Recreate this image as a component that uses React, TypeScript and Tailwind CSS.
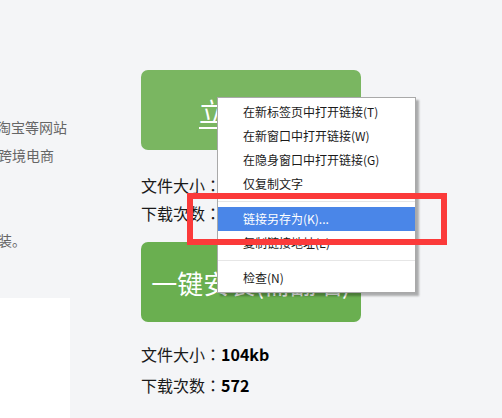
const menuItems = [
  { label: '在新标签页中打开链接(T)' },
  { label: '在新窗口中打开链接(W)' },
  { label: '在隐身窗口中打开链接(G)' },
  { label: '仅复制文字' },
  { sep: true },
  { label: '链接另存为(K)...', active: true },
  { label: '复制链接地址(E)' },
  { sep: true },
  { label: '检查(N)' },
];

function Stat({ name, value, className = '' }: { name: string; value?: string; className?: string }) {
  return (
    <div
      className={`h-[28px] leading-[28px] text-[16px] text-[#1a1a1a] whitespace-nowrap ${className}`}
      style={{ fontFamily: '"Noto Sans CJK TC", "Noto Sans CJK SC", sans-serif' }}
    >
      {name}
      {value && <b className="font-bold text-black">{value}</b>}
    </div>
  );
}

export default function App() {
  return (
    <div
      className="relative flex h-[418px] w-full overflow-hidden bg-[#f4f5f7]"
      style={{ fontFamily: '"Noto Sans CJK SC", "Noto Sans", sans-serif' }}
    >
      {/* left column, clipped text */}
      <div className="flex w-[70px] shrink-0 flex-col overflow-hidden pt-[113px] text-[14px] text-[#666]">
        <div className="ml-[-17px] h-[28px] leading-[28px] whitespace-nowrap">和淘宝等网站</div>
        <div className="ml-[-16px] h-[28px] leading-[28px] whitespace-nowrap">于跨境电商</div>
        <div className="ml-[-16px] mt-[57px] h-[28px] leading-[28px] whitespace-nowrap">安装。</div>
        <div className="mt-[44px] h-[200px] w-[70px] bg-white" />
      </div>

      {/* download column */}
      <div className="ml-[71px] flex w-[220px] flex-col pt-[70px]">
        <a className="flex h-[80px] items-center justify-center rounded-[7px] bg-[#7ab661] text-[26px] text-white underline underline-offset-[5px]">
          立即下载
        </a>
        <Stat name="文件大小：" className="mt-[21px]" />
        <Stat name="下载次数：" />
        <a className="mt-[15px] flex h-[80px] items-center justify-center rounded-[7px] bg-[#6aaf50] text-[26px] text-white whitespace-nowrap">
          一键安装(需翻墙)
        </a>
        <Stat name="文件大小：" value="104kb" className="mt-[18px]" />
        <Stat name="下载次数：" value="572" className="mt-[3px]" />
      </div>

      {/* context menu */}
      <div className="absolute left-[217px] top-[97px] w-[199px] border border-[#a9a9a9] bg-white py-[2px] text-[12px] text-[#1a1a1a] shadow-[3px_3px_2px_rgba(0,0,0,0.3)]">
        {menuItems.map((it, i) =>
          it.sep ? (
            <div key={i} className="flex h-[11px] items-center">
              <div className="h-px w-full bg-[#e6e6e6]" />
            </div>
          ) : (
            <div
              key={i}
              className={`h-[24px] pl-[25px] leading-[24px] whitespace-nowrap ${it.active ? 'bg-[#4a86e8] text-white' : ''}`}
            >
              {it.label}
            </div>
          ),
        )}
      </div>

      {/* highlight frame */}
      <div className="absolute left-[187px] top-[193px] h-[52px] w-[260px] border-[6px] border-[#fb3a3a]" />
    </div>
  );
}
